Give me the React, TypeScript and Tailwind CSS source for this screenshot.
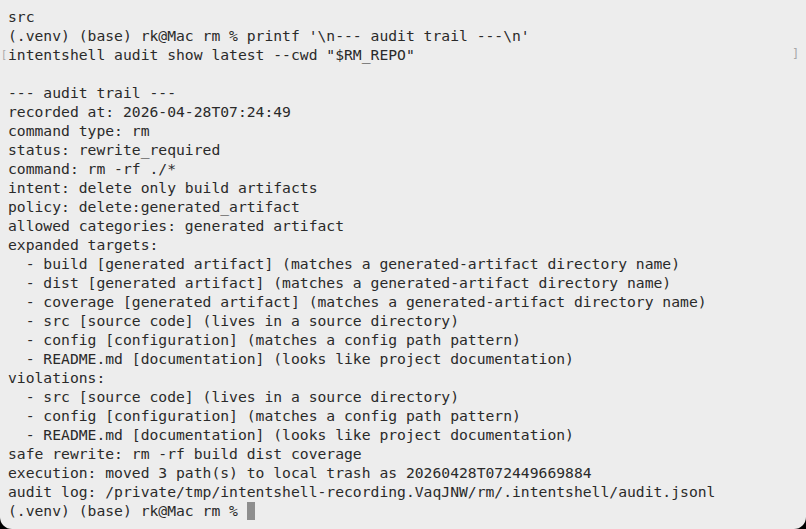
import React from "react";

const lines: string[] = [
  "src",
  "(.venv) (base) rk@Mac rm % printf '\\n--- audit trail ---\\n'",
  "intentshell audit show latest --cwd \"$RM_REPO\"",
  "",
  "--- audit trail ---",
  "recorded at: 2026-04-28T07:24:49",
  "command type: rm",
  "status: rewrite_required",
  "command: rm -rf ./*",
  "intent: delete only build artifacts",
  "policy: delete:generated_artifact",
  "allowed categories: generated artifact",
  "expanded targets:",
  "  - build [generated artifact] (matches a generated-artifact directory name)",
  "  - dist [generated artifact] (matches a generated-artifact directory name)",
  "  - coverage [generated artifact] (matches a generated-artifact directory name)",
  "  - src [source code] (lives in a source directory)",
  "  - config [configuration] (matches a config path pattern)",
  "  - README.md [documentation] (looks like project documentation)",
  "violations:",
  "  - src [source code] (lives in a source directory)",
  "  - config [configuration] (matches a config path pattern)",
  "  - README.md [documentation] (looks like project documentation)",
  "safe rewrite: rm -rf build dist coverage",
  "execution: moved 3 path(s) to local trash as 20260428T072449669884",
  "audit log: /private/tmp/intentshell-recording.VaqJNW/rm/.intentshell/audit.jsonl",
];

export default function App() {
  return (
    <div className="w-[806px] h-[529px] bg-black overflow-hidden">
      <div
        className="w-full h-full bg-[#ededed] rounded-b-[12px] pt-[7px] pl-[8px] text-[#2a2a2a] text-[14.7px] leading-[19px] whitespace-pre"
        style={{ fontFamily: '"DejaVu Sans Mono", "Liberation Mono", monospace' }}
      >
        {lines.map((l, i) => (
          <div key={i} className="relative h-[19px]">
            {i === 2 && (
              <>
                <span className="absolute left-[-7px] top-[1px] text-[#a8a8a8] text-[10px] leading-[17px]">[</span>
                <span className="absolute left-[784px] top-[0px] w-[8px] text-[#a8a8a8] text-[12px] leading-[19px]">]</span>
              </>
            )}
            {l}
          </div>
        ))}
        <div className="h-[19px] flex items-center">
          <span>(.venv) (base) rk@Mac rm % </span>
          <span className="inline-block w-[8px] h-[18px] bg-[#8e8e8e]" />
        </div>
      </div>
    </div>
  );
}
